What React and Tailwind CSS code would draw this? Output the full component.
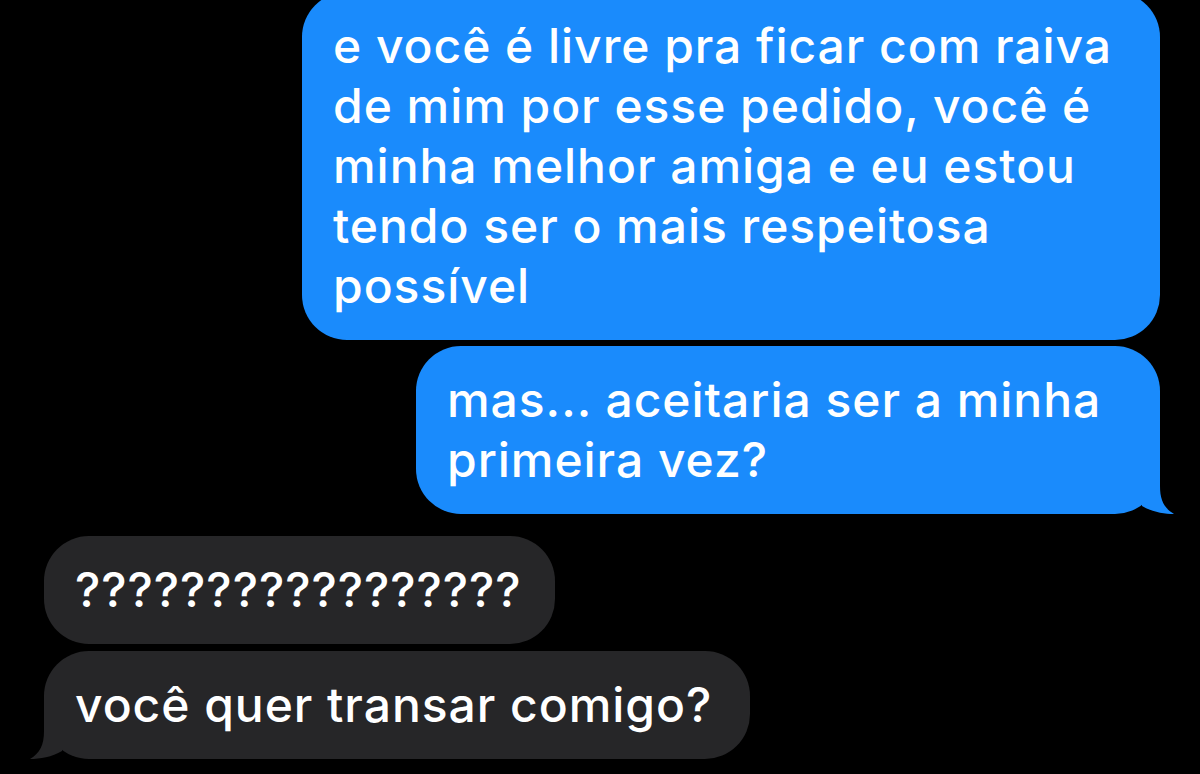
import React from 'react';

const font = { fontFamily: 'Inter, "Noto Sans", sans-serif' };

function Tail({ color, side }) {
  // small curled tail at the bottom corner of the last bubble in a group
  const pos = side === 'right' ? 'right-[-14px]' : 'left-[-14px] -scale-x-100';
  return (
    <svg className={`absolute bottom-0 ${pos} w-[50px] h-[50px]`} viewBox="0 0 50 50">
      <path d="M36 0 L36 22 C36 36 40 44 50 50 C40 50 28 48 18 42 L18 0 Z" fill={color} />
    </svg>
  );
}

function Bubble({ lines, sent, width, tail }) {
  const color = sent ? '#1a8bfc' : '#262628';
  return (
    <div
      className={`relative rounded-[45px] px-[31px] py-[24px] text-[48px] leading-[60px] tracking-[0.02em] font-medium text-white whitespace-nowrap ${
        sent ? 'self-end bg-[#1a8bfc]' : 'self-start bg-[#262628]'
      }`}
      style={{ width }}
    >
      {lines.map((l, i) => (
        <div key={i}>{l}</div>
      ))}
      {tail && <Tail color={color} side={sent ? 'right' : 'left'} />}
    </div>
  );
}

export default function App() {
  return (
    <div className="w-[1200px] h-[774px] bg-black overflow-hidden" style={font}>
      <div className="flex flex-col pl-[44px] pr-[40px] -mt-[8px]">
        <Bubble
          sent
          width={858}
          lines={[
            'e você é livre pra ficar com raiva',
            'de mim por esse pedido, você é',
            'minha melhor amiga e eu estou',
            'tendo ser o mais respeitosa',
            'possível',
          ]}
        />
        <div className="mt-[6px] self-end">
          <Bubble sent tail width={744} lines={['mas... aceitaria ser a minha', 'primeira vez?']} />
        </div>
        <div className="mt-[22px] self-start">
          <Bubble width={511} lines={['?????????????????']} />
        </div>
        <div className="mt-[7px] self-start">
          <Bubble tail width={706} lines={['você quer transar comigo?']} />
        </div>
      </div>
    </div>
  );
}
